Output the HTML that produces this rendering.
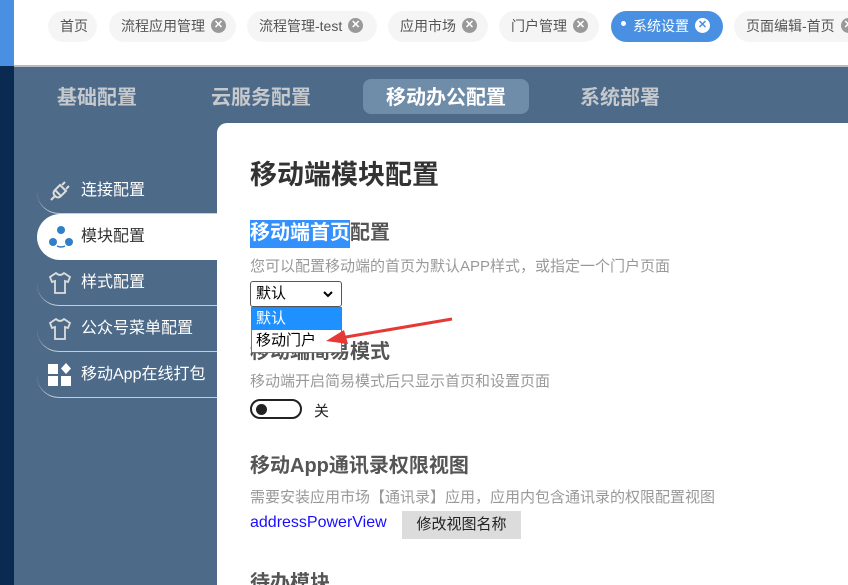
<!DOCTYPE html>
<html><head><meta charset="utf-8"><style>
*{margin:0;padding:0;box-sizing:border-box}
html,body{width:848px;height:585px;overflow:hidden}
body{position:relative;background:#fff;font-family:"Liberation Sans","Noto Sans CJK SC",sans-serif}
.a{position:absolute;white-space:nowrap}
.tab{position:absolute;top:11px;height:31px;border-radius:16px;background:#f5f5f5;color:#555;font-size:14px;line-height:31px;padding-left:12px}
.x{display:inline-block;width:15px;height:15px;border-radius:50%;background:#999;color:#fff;font-size:11px;line-height:15px;text-align:center;vertical-align:middle;margin-left:6px;margin-top:-3px;font-weight:bold}
.nav{position:absolute;top:84px;font-size:20px;font-weight:bold;color:#c5c8cc;line-height:28px}
.si{position:absolute;left:37px;width:180px;height:46px;color:#fff;font-size:16px;line-height:46px;padding-left:44px;border-bottom:1.5px solid #c8cdd3;border-bottom-left-radius:22px}
.ic{position:absolute;left:11px;top:11px}
h3{position:absolute;left:250px;font-size:20px;font-weight:bold;color:#555;white-space:nowrap}
.d{position:absolute;left:250px;font-size:15px;color:#999;white-space:nowrap}
</style></head><body>
<div class="a" style="left:0;top:0;width:14px;height:66px;background:#4a90e2"></div>
<div class="a" style="left:0;top:66px;width:14px;height:519px;background:#0b2a52"></div>
<div class="a" style="left:14px;top:65px;width:834px;height:2px;background:#b8bcc2"></div>
<div class="a" style="left:14px;top:67px;width:834px;height:518px;background:#4d6a88"></div>

<div class="tab" style="left:48px;width:49px">首页</div>
<div class="tab" style="left:109px;width:127px">流程应用管理<span class="x">✕</span></div>
<div class="tab" style="left:247px;width:130px">流程管理-test<span class="x">✕</span></div>
<div class="tab" style="left:388px;width:100px">应用市场<span class="x">✕</span></div>
<div class="tab" style="left:499px;width:100px">门户管理<span class="x">✕</span></div>
<div class="tab" style="left:611px;width:112px;background:#4a90e2;color:#fff;padding-left:10px"><span style="display:inline-block;width:5px;height:5px;border-radius:50%;background:#fff;vertical-align:middle;margin-right:7px;margin-top:-8px"></span>系统设置<span class="x" style="background:#fff;color:#4a90e2">✕</span></div>
<div class="tab" style="left:734px;width:130px">页面编辑-首页<span class="x">✕</span></div>

<div class="nav" style="left:57px">基础配置</div>
<div class="nav" style="left:211px">云服务配置</div>
<div class="a" style="left:363px;top:79px;width:166px;height:35px;border-radius:8px;background:#6f8ca8"></div>
<div class="nav" style="left:386px;color:#fff">移动办公配置</div>
<div class="nav" style="left:580px">系统部署</div>

<div class="si" style="top:168px"><svg class="ic" width="24" height="24" viewBox="0 0 24 24" fill="none" stroke="#ddd" stroke-width="2"><path d="M3 21l4-4M17 3l-3 3M21 7l-3 3M7 11l6 6 5-5-6-6zM7 11q-3 3 0 6q3 3 6 0"/></svg>连接配置</div>
<div class="si" style="top:214px;background:#fff;color:#333;border:none;border-radius:23px 0 0 23px"><svg class="ic" width="26" height="24" viewBox="0 0 26 24"><circle cx="13" cy="5" r="4" fill="#2f80c8"/><circle cx="5" cy="17" r="4" fill="#2f80c8"/><circle cx="21" cy="17" r="4" fill="#2f80c8"/><path d="M9 21q4 2 8 0" stroke="#2f80c8" fill="none" stroke-width="1.5"/></svg>模块配置</div>
<div class="si" style="top:260px"><svg class="ic" width="24" height="24" viewBox="0 0 24 24" fill="none" stroke="#ddd" stroke-width="1.8"><path d="M8 2l-6 4 2 5 3-1v12h10V10l3 1 2-5-6-4q-4 4-8 0z"/></svg>样式配置</div>
<div class="si" style="top:306px"><svg class="ic" width="24" height="24" viewBox="0 0 24 24" fill="none" stroke="#ddd" stroke-width="1.8"><path d="M8 2l-6 4 2 5 3-1v12h10V10l3 1 2-5-6-4q-4 4-8 0z"/></svg>公众号菜单配置</div>
<div class="si" style="top:352px"><svg class="ic" width="24" height="24" viewBox="0 0 24 24" fill="#fff"><rect x="0" y="1" width="10" height="10"/><rect x="0" y="13" width="10" height="10"/><rect x="13" y="13" width="10" height="10"/><path d="M18 0l5 5.5-5 5.5-5-5.5z"/></svg>移动App在线打包</div>

<div class="a" style="left:217px;top:123px;width:631px;height:462px;background:#fff;border-top-left-radius:10px"></div>

<div class="a" style="left:250px;top:153px;font-size:27px;font-weight:bold;color:#333">移动端模块配置</div>
<h3 style="top:216px"><span style="background:#3390ff;color:#fff;padding:2px 0 4px">移动端首页</span>配置</h3>
<div class="d" style="top:255px">您可以配置移动端的首页为默认APP样式，或指定一个门户页面</div>
<div class="a" style="left:250px;top:281px;width:92px;height:26px;border:1px solid #555;border-radius:3px;font-size:15px;line-height:24px;padding-left:5px;color:#000">默认<svg style="position:absolute;right:8px;top:9px" width="10" height="7"><path d="M1 1l4 4 4-4" stroke="#000" stroke-width="2" fill="none"/></svg></div>
<h3 style="top:335px">移动端简易模式</h3>
<div class="a" style="left:251px;top:307px;width:91px;height:46px;border:1px solid #777;background:#fff;font-size:15px;color:#000">
<div style="background:#1e90ff;color:#fff;height:22px;line-height:22px;padding-left:4px">默认</div>
<div style="height:22px;line-height:22px;padding-left:4px">移动门户</div></div>
<svg class="a" style="left:320px;top:315px" width="135" height="35"><path d="M132 4L20 23" stroke="#e53935" stroke-width="3"/><path d="M6 26l18-11 4 14z" fill="#e53935"/></svg>
<div class="d" style="top:370px">移动端开启简易模式后只显示首页和设置页面</div>
<div class="a" style="left:250px;top:399px;width:52px;height:20px;border:2px solid #222;border-radius:10px"><div style="position:absolute;left:4px;top:3px;width:11px;height:11px;border-radius:50%;background:#222"></div></div>
<div class="a" style="left:314px;top:400px;font-size:15px;color:#222">关</div>
<h3 style="top:449px">移动App通讯录权限视图</h3>
<div class="d" style="top:486px">需要安装应用市场【通讯录】应用，应用内包含通讯录的权限配置视图</div>
<div class="a" style="left:250px;top:514px;font-size:16px;color:#1a0dff">addressPowerView</div>
<div class="a" style="left:402px;top:511px;width:119px;height:28px;background:#dcdcdc;font-size:15px;line-height:28px;text-align:center;color:#222">修改视图名称</div>
<h3 style="top:566px">待办模块</h3>
</body></html>
